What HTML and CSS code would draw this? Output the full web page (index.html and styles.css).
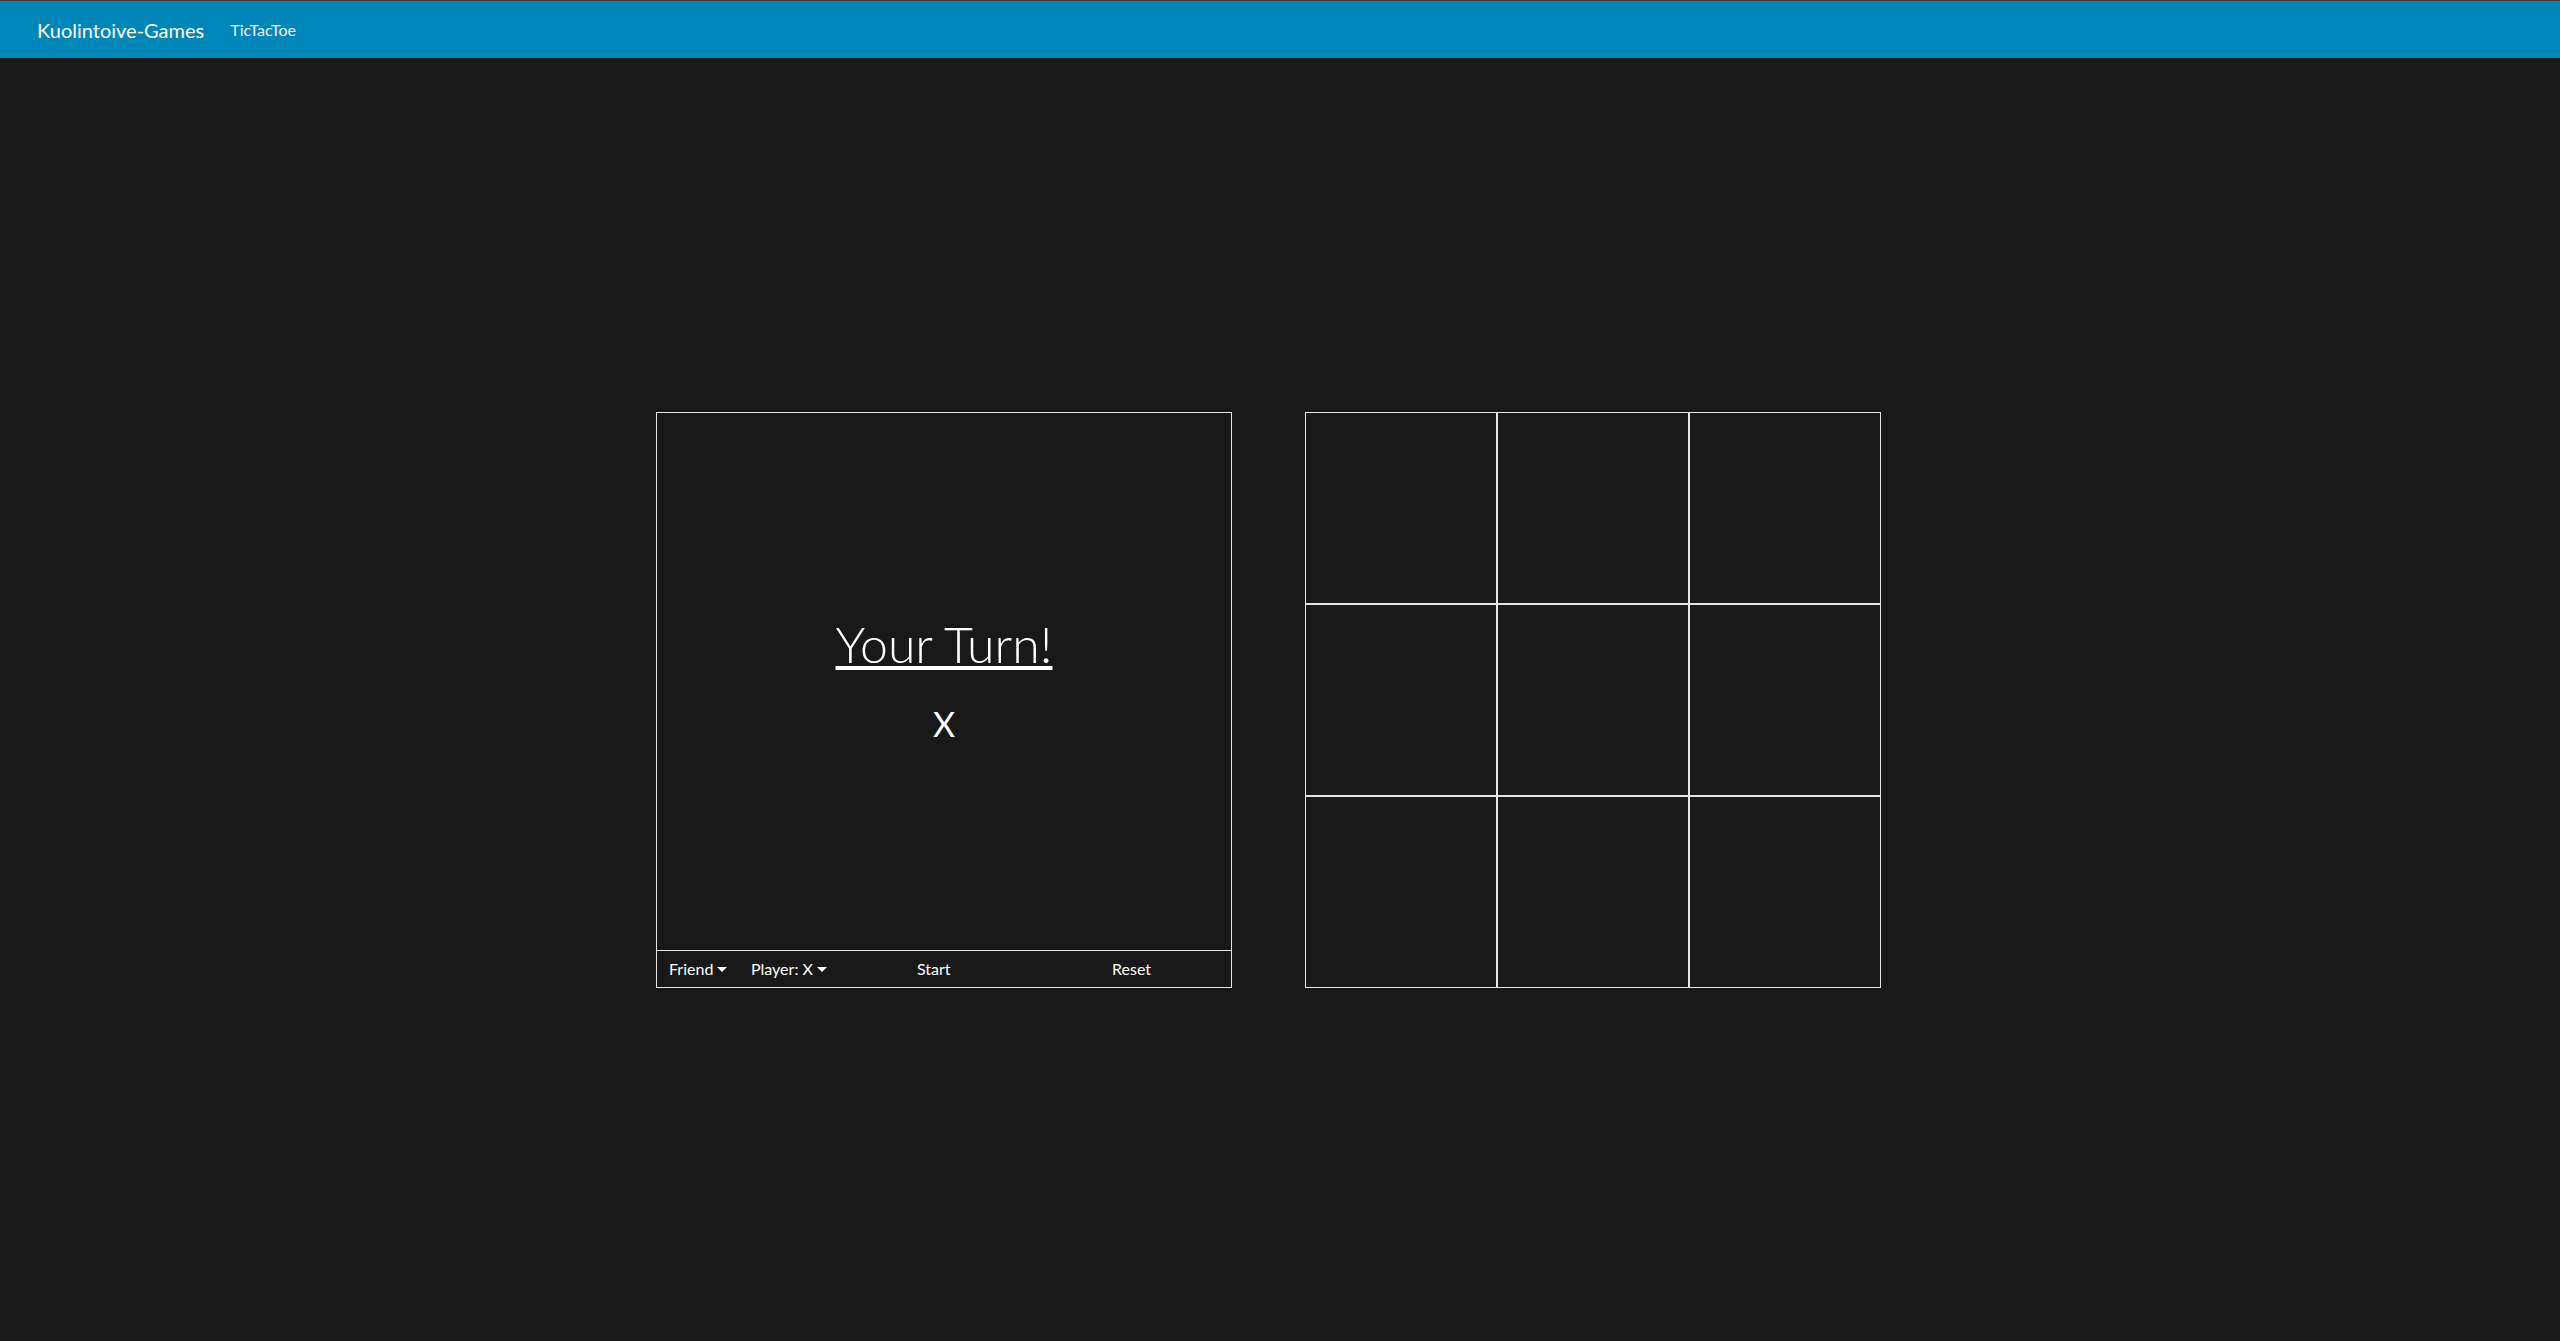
FILE: index.html
```html
<!DOCTYPE html>
<html lang="en">
<head>
<meta charset="utf-8">
<title>Kuolintoive-Games - TicTacToe</title>
<link rel="stylesheet" href="styles.css">
</head>
<body>
<header class="navbar">
  <a class="brand" href="#">Kuolintoive-Games</a>
  <a class="nav-link" href="#">TicTacToe</a>
</header>
<main class="main">
  <div class="layout">
    <div class="col col-left">
      <section class="panel">
        <div class="panel-body">
          <h1 class="turn-title">Your Turn!</h1>
          <div class="turn-mark">X</div>
        </div>
        <nav class="controls">
          <div class="control"><span class="dropdown">Friend</span></div>
          <div class="control"><span class="dropdown">Player: X</span></div>
          <div class="control">Start</div>
          <div class="control">Reset</div>
        </nav>
      </section>
    </div>
    <div class="col col-right">
      <div class="board">
        <div class="cell"></div>
        <div class="cell"></div>
        <div class="cell"></div>
        <div class="cell"></div>
        <div class="cell"></div>
        <div class="cell"></div>
        <div class="cell"></div>
        <div class="cell"></div>
        <div class="cell"></div>
      </div>
    </div>
  </div>
</main>
</body>
</html>
```
FILE: styles.css
```css
* { box-sizing: border-box; }
html, body { margin: 0; padding: 0; }
body {
  background: #191919;
  color: #fff;
  font-family: "Segoe UI", Lato, "Liberation Sans", sans-serif;
}
.navbar {
  height: 58px;
  background: #0186b9;
  border-top: 1px solid #3a3a3a;
  display: flex;
  align-items: center;
  padding: 0 0 0 37px;
}
.brand {
  color: #fff;
  text-decoration: none;
  font-size: 20px;
  line-height: 1;
  margin-right: 26px;
}
.nav-link {
  color: #f2f2f2;
  text-decoration: none;
  font-size: 16px;
  line-height: 1;
  padding-top: 1px;
}
.main {
  min-height: calc(100vh - 58px);
  display: flex;
  align-items: center;
}
.layout {
  width: 1296px;
  margin: 0 auto;
  display: grid;
  grid-template-columns: 1fr 1fr;
}
.col-left { padding-left: 24px; }
.col-right { padding-left: 25px; }
.panel {
  width: 576px;
  height: 576px;
  border: 1px solid #e6e6e6;
  display: flex;
  flex-direction: column;
}
.panel-body {
  flex: 1;
  display: flex;
  flex-direction: column;
  align-items: center;
  justify-content: center;
  padding-bottom: 3px;
}
.turn-title {
  margin: 0;
  font-weight: 300;
  font-size: 50px;
  line-height: 1.2;
  text-decoration: underline;
  text-decoration-thickness: 4px;
  text-underline-offset: 3px;
}
.turn-mark {
  font-size: 34px;
  font-weight: 400;
  line-height: 1.2;
  margin-top: 30px;
}
.controls {
  height: 37px;
  border-top: 1px solid #e6e6e6;
  display: grid;
  grid-template-columns: 82px 166px 195px 1fr;
  align-items: center;
  font-size: 16px;
}
.control {
  padding: 0 12px;
  white-space: nowrap;
}
.dropdown::after {
  content: "";
  display: inline-block;
  margin-left: 4px;
  vertical-align: 3px;
  border-top: 5px solid #fff;
  border-left: 5px solid transparent;
  border-right: 5px solid transparent;
}
.board {
  width: 576px;
  height: 576px;
  display: grid;
  grid-template-columns: repeat(3, 192px);
  grid-template-rows: repeat(3, 192px);
}
.cell {
  border: 1px solid #e6e6e6;
}
```
